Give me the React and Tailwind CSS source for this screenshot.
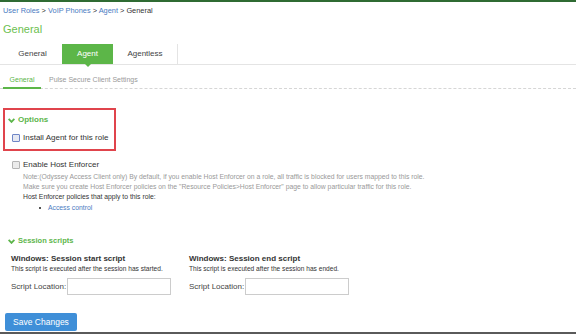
import React from "react";

function Chevron() {
  return (
    <svg width="7" height="5" viewBox="0 0 7 5" className="mr-[3px]">
      <path d="M0.6 0.8 L3.5 3.8 L6.4 0.8" fill="none" stroke="#5cb54a" strokeWidth="1.9" />
    </svg>
  );
}

function Checkbox({ active }) {
  return (
    <span
      className={
        "inline-block shrink-0 w-[8px] h-[8px] rounded-[1px] border " +
        (active ? "border-[#6f86c6] bg-[#e6e9f2]" : "border-[#b5b5b5] bg-[#ececec]")
      }
    />
  );
}

export default function App() {
  return (
    <div
      className="w-[576px] h-[334px] bg-white relative overflow-hidden flex flex-col"
      style={{ fontFamily: '"Liberation Sans", Arial, sans-serif' }}
    >
      <div className="h-[2px] bg-[#2f6b33]" />
      <div className="pl-[3px] pt-[4px] text-[7.4px] leading-[10px] text-[#333] whitespace-nowrap">
        <span className="text-[#4a7bc1]">User Roles</span>
        <span> &gt; </span>
        <span className="text-[#4a7bc1]">VoIP Phones</span>
        <span> &gt; </span>
        <span className="text-[#4a7bc1]">Agent</span>
        <span> &gt; General</span>
      </div>
      <div className="pl-[3px] pt-[7px] text-[11px] leading-[13px] text-[#6cbf50]">General</div>

      {/* Tabs */}
      <div className="mt-[8px] flex border-b border-[#e4e4e4] h-[21px] text-[8px]">
        <div className="w-[59px] ml-[3px] flex items-center justify-center text-[#444]">General</div>
        <div className="w-[51px] relative flex items-center justify-center bg-[#5cb648] text-white">
          Agent
          <span className="absolute left-1/2 -translate-x-1/2 bottom-[-3px] w-0 h-0 border-l-[3px] border-r-[3px] border-t-[3px] border-l-transparent border-r-transparent border-t-[#5cb648]" />
        </div>
        <div className="w-[65px] flex items-center justify-center text-[#444] border-r border-[#e4e4e4]">Agentless</div>
      </div>

      {/* Sub tabs */}
      <div className="mt-[8px] flex items-end h-[16px] border-b border-dashed border-[#d6d6d6] text-[7px]">
        <div className="ml-[3px] w-[38px] h-full flex items-center justify-center text-[#5cb648] border-b-2 border-[#5cb648] mb-[-1px]">
          General
        </div>
        <div className="ml-[8px] h-full flex items-center text-[#999]">Pulse Secure Client Settings</div>
      </div>

      {/* Options box */}
      <div className="mt-[19px] ml-[3px] w-[113px] h-[43px] border-2 border-[#e0444c] flex flex-col pl-[3px]">
        <div className="mt-[5px] flex items-center text-[8px] leading-[10px] text-[#5cb54a] font-semibold">
          <Chevron />
          Options
        </div>
        <div className="mt-[7px] ml-[4px] flex items-center gap-[3px] text-[8px] leading-[11px] text-[#333] whitespace-nowrap">
          <Checkbox active />
          Install Agent for this role
        </div>
      </div>

      <div className="mt-[8px] ml-[12px] flex items-center gap-[3px] text-[8px] leading-[11px] text-[#333]">
        <Checkbox />
        Enable Host Enforcer
      </div>
      <div className="ml-[23px] mt-[2px] text-[6.8px] leading-[10px] text-[#999] whitespace-nowrap">
        <div>Note:(Odyssey Access Client only) By default, if you enable Host Enforcer on a role, all traffic is blocked for users mapped to this role.</div>
        <div>Make sure you create Host Enforcer policies on the "Resource Policies&gt;Host Enforcer" page to allow particular traffic for this role.</div>
        <div className="text-[#333]">Host Enforcer policies that apply to this role:</div>
        <div className="flex items-center ml-[16px] mt-[1px] text-[#4a7bc1]">
          <span className="inline-block w-[2px] h-[2px] bg-[#555] mr-[7px]" />
          Access control
        </div>
      </div>

      <div className="mt-[23px] ml-[8px] flex items-center text-[7.5px] leading-[10px] text-[#5cb54a] font-semibold">
        <Chevron />
        Session scripts
      </div>

      <div className="mt-[8px] flex">
        <div className="ml-[11px] w-[178px] flex flex-col">
          <div className="text-[8px] leading-[10px] font-bold text-[#333]">Windows: Session start script</div>
          <div className="text-[6.6px] leading-[9px] text-[#333]">This script is executed after the session has started.</div>
          <div className="mt-[5px] flex items-center text-[8px] text-[#444]">
            Script Location:
            <span className="ml-[1px] w-[104px] h-[17px] border border-[#ccc] bg-white inline-block" />
          </div>
        </div>
        <div className="w-[178px] flex flex-col">
          <div className="text-[8px] leading-[10px] font-bold text-[#333]">Windows: Session end script</div>
          <div className="text-[6.6px] leading-[9px] text-[#333]">This script is executed after the session has ended.</div>
          <div className="mt-[5px] flex items-center text-[8px] text-[#444]">
            Script Location:
            <span className="ml-[1px] w-[104px] h-[17px] border border-[#ccc] bg-white inline-block" />
          </div>
        </div>
      </div>

      <div className="mt-[18px] ml-[5px] w-[72px] h-[18px] rounded-[2px] bg-[#3f8fd8] text-white text-[8.5px] flex items-center justify-center">
        Save Changes
      </div>
      <div className="flex-1" />
      <div className="h-[2px] bg-[#5a5a5a]" />
    </div>
  );
}
